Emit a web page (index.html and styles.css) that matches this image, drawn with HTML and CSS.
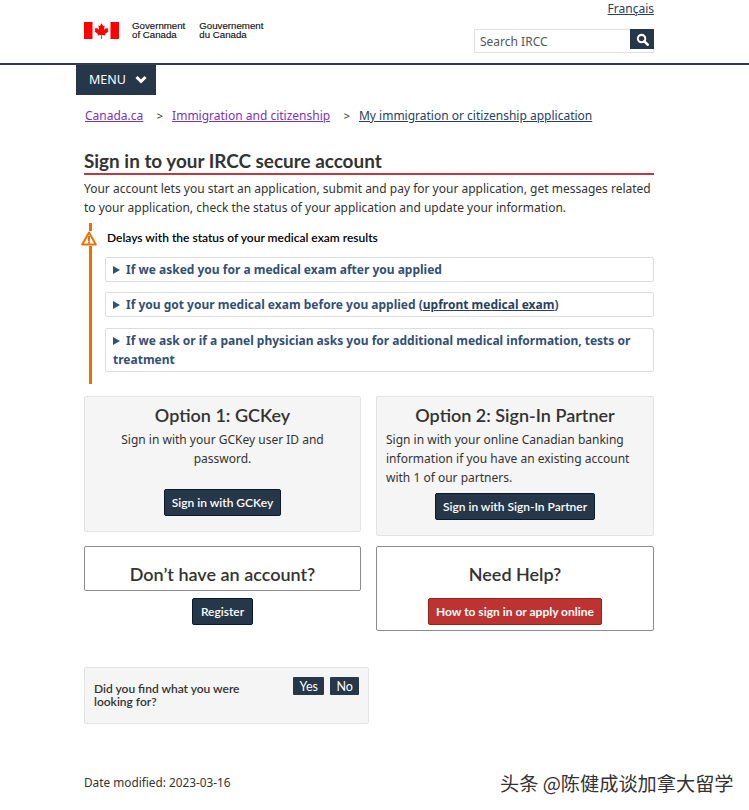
FILE: index.html
```html
<!DOCTYPE html>
<html lang="en">
<head>
<meta charset="utf-8">
<title>Sign in to your IRCC secure account</title>
<link rel="stylesheet" href="styles.css">
</head>
<body>
<header class="site-header">
  <div class="header-inner">
    <div class="brand">
      <svg class="flag" width="35" height="17" viewBox="0 0 35 17"><rect width="8.5" height="17" fill="#f00"/><rect x="26.5" width="8.5" height="17" fill="#f00"/><path fill="#f00" d="M17.5 1.2l-1.5 2.6c-.2.3-.5.3-.7.1l-1-.5.7 3.6c.1.6-.3.8-.7.3l-1.5-1.6-.3.9-1.9-.4.6 2c.1.4.1.6-.2.7l-.7.3 3.300 2.600c.2.2.3.4.2.7l-.3 1 3.300-.4c.2 0 .4.1.4.4l-.2 3.300h1l-.2-3.300c0-.3.2-.4.4-.4l3.300.4-.3-1c-.1-.3 0-.5.2-.7l3.300-2.600-.7-.3c-.3-.1-.3-.3-.2-.7l.6-2-1.900.4-.3-.9-1.500 1.600c-.4.5-.8.3-.7-.3l.7-3.600-1 .5c-.2.2-.5.2-.7-.1z"/></svg>
      <div class="wordmark"><span>Government<br>of Canada</span><span>Gouvernement<br>du Canada</span></div>
    </div>
    <div class="tools">
      <a class="lang" href="#">Français</a>
      <form class="search">
        <input class="search-input" type="text" placeholder="Search IRCC">
        <button class="search-btn" type="button" aria-label="Search"><svg width="13" height="13" viewBox="0 0 14 14"><circle cx="6" cy="6" r="4" fill="none" stroke="#fff" stroke-width="2.2"/><path d="M9 9l3.600 3.600" stroke="#fff" stroke-width="2.800" stroke-linecap="round"/></svg></button>
      </form>
    </div>
  </div>
</header>
<div class="menu-row">
  <button class="menu-btn" type="button">MENU <svg width="12" height="9" viewBox="0 0 12 9"><path d="M1.500 2l4.500 4.500L10.500 2" fill="none" stroke="#fff" stroke-width="3"/></svg></button>
</div>
<main class="page">
  <nav class="crumbs">
    <a class="visited" href="#">Canada.ca</a><span class="sep">&gt;</span>
    <a class="visited" href="#">Immigration and citizenship</a><span class="sep">&gt;</span>
    <a href="#">My immigration or citizenship application</a>
  </nav>
  <h1 class="title">Sign in to your IRCC secure account</h1>
  <p class="intro">Your account lets you start an application, submit and pay for your application, get messages related to your application, check the status of your application and update your information.</p>
  <section class="alert">
    <svg class="alert-icon" width="16" height="15" viewBox="0 0 16 15"><path d="M8 1.500L14.800 13.500H1.200z" fill="#fff" stroke="#ee7100" stroke-width="2" stroke-linejoin="round"/><rect x="7" y="5" width="2" height="5" fill="#ee7100"/><rect x="7" y="10.500" width="2" height="2" fill="#ee7100"/></svg>
    <h2 class="alert-title">Delays with the status of your medical exam results</h2>
    <div class="detail"><span class="tri"></span>If we asked you for a medical exam after you applied</div>
    <div class="detail"><span class="tri"></span>If you got your medical exam before you applied (<a href="#">upfront medical exam</a>)</div>
    <div class="detail detail-last"><span class="tri"></span>If we ask or if a panel physician asks you for additional medical information, tests or treatment</div>
  </section>
  <div class="options">
    <div class="col">
      <section class="well centered">
        <h2 class="option-title">Option 1: GCKey</h2>
        <p class="option-text">Sign in with your GCKey user ID and password.</p>
        <div class="btn-row btn-row-gap"><a class="btn" href="#">Sign in with GCKey</a></div>
      </section>
      <section class="outline short centered">
        <h2 class="option-title">Don’t have an account?</h2>
      </section>
      <div class="btn-row"><a class="btn btn-wide" href="#">Register</a></div>
    </div>
    <div class="col">
      <section class="well">
        <h2 class="option-title centered">Option 2: Sign-In Partner</h2>
        <p class="option-text">Sign in with your online Canadian banking information if you have an existing account with 1 of our partners.</p>
        <div class="btn-row"><a class="btn" href="#">Sign in with Sign-In Partner</a></div>
      </section>
      <section class="outline centered tall">
        <h2 class="option-title">Need Help?</h2>
        <div class="btn-row btn-row-help"><a class="btn btn-red" href="#">How to sign in or apply online</a></div>
      </section>
    </div>
  </div>
  <section class="feedback">
    <p class="feedback-q">Did you find what you were looking for?</p>
    <div class="feedback-btns"><a class="mini" href="#">Yes</a><a class="mini" href="#">No</a></div>
  </section>
  <p class="modified">Date modified: 2023-03-16</p>
</main>
<div class="watermark">头条 @陈健成谈加拿大留学</div>
</body>
</html>
```
FILE: styles.css
```css
* { box-sizing: border-box; }
html, body { margin: 0; padding: 0; }
body { position: relative; height: 810px; overflow: hidden; background: #fff; color: #333; font-family: "Noto Sans", "Open Sans", sans-serif; font-size: 12px; line-height: 19px; }
a { color: #284162; }
.site-header { height: 65px; border-bottom: 2px solid #333f4a; }
.header-inner { width: 570px; margin-left: 84px; display: flex; justify-content: space-between; }
.brand { display: flex; align-items: flex-start; gap: 13px; padding-top: 22px; }
.flag { display: block; }
.wordmark { display: flex; gap: 14px; margin-top: -1px; font-family: "Liberation Sans", sans-serif; font-size: 9.7px; line-height: 9.3px; color: #111; -webkit-text-stroke: .15px #111; }
.tools { width: 180px; display: flex; flex-direction: column; align-items: flex-end; }
.lang { height: 29px; line-height: 17px; color: #284162; }
.search { display: flex; width: 180px; height: 24px; border: 1px solid #e0e0e0; position: relative; }
.search-input { flex: 1; min-width: 0; border: 0; padding: 0 5px; font: 12px "Noto Sans", sans-serif; color: #555; background: transparent; outline: 0; }
.search-input::placeholder { color: #555; opacity: 1; }
.search-btn { position: absolute; top: -1px; right: -1px; width: 24px; height: 20px; border: 0; padding: 0; background: #26374a; display: flex; align-items: center; justify-content: center; }
.menu-row { padding-left: 76px; height: 30px; }
.menu-btn { width: 80px; height: 30px; border: 0; padding: 0 0 2px 13px; background: #26374a; color: #fff; font: 12.5px "Noto Sans", sans-serif; display: flex; align-items: center; gap: 9px; }
.page { width: 570px; margin-left: 84px; }
.crumbs { padding: 11px 0 0 1px; height: 47px; display: flex; align-items: flex-start; }
.visited { color: #7834bc; }
.sep { margin: 0 9px 0 13.5px; font-size: 11px; color: #333; }
.title { margin: 0; height: 33px; padding-top: 5px; border-bottom: 2px solid #bc3a40; font-family: Lato, sans-serif; font-weight: 700; font-size: 18.9px; line-height: 28px; color: #333; }
.intro { margin: 4px 0 0; }
.alert { position: relative; margin: 6px 0 0 5px; padding: 5px 0 0 13px; border-left: 3px solid #ee7100; height: 161px; }
.alert-icon { position: absolute; left: -11px; top: 8px; background: #fff; }
.alert-title { margin: 0 0 10px 2px; font: 600 12px/19px Lato, sans-serif; color: #000; }
.detail { margin-top: 10px; padding: 2px 7px; border: 1px solid #ddd; border-radius: 2px; color: #335075; font-weight: 700; font-size: 12px; }
.alert-title + .detail { margin-top: 0; }
.detail-last { margin-top: 11px; }
.detail a { color: #284162; }
.tri { display: inline-block; margin: 0 6px 0 0; width: 0; height: 0; border-left: 7px solid #335075; border-top: 4px solid transparent; border-bottom: 4px solid transparent; }
.options { display: grid; grid-template-columns: 277px 278px; column-gap: 15px; align-items: start; margin-top: 12px; }
.col { display: flex; flex-direction: column; }
.centered { text-align: center; }
.well { padding: 6px 9px 15px; background: #f5f5f5; border: 1px solid #e3e3e3; border-radius: 2px; }
.outline { margin-top: 14px; padding-top: 15px; border: 1px solid #8c8c8c; border-radius: 2px; }
.short { height: 45px; margin-bottom: 7px; }
.tall { height: 85px; margin-top: 10px; }
.option-title { margin: 0; font-family: Lato, sans-serif; font-weight: 600; font-size: 18px; line-height: 25px; color: #333; }
.option-text { margin: 2px 0 6px; }
.btn-row { display: flex; justify-content: center; }
.btn-row-gap { margin-top: 21px; }
.btn-row-help { margin-top: 11px; }
.btn { display: block; height: 27px; padding: 4px 7px; background: #26374a; border: 1px solid #091c2d; border-radius: 2px; color: #fff; font-family: Lato, sans-serif; font-weight: 600; font-size: 12px; line-height: 17px; text-decoration: none; }
.btn-wide { padding: 4px 7.5px; }
.btn-red { background: #bc3331; border-color: #942514; font-weight: 700; }
.feedback { width: 285px; height: 57px; margin-top: 36px; padding: 9px; display: flex; background: #f5f5f5; border: 1px solid #e3e3e3; border-radius: 2px; }
.feedback-q { margin: 5px 0 0; width: 160px; font-family: Lato, sans-serif; font-weight: 600; font-size: 12px; line-height: 13px; color: #333; }
.feedback-btns { margin-left: 39px; display: flex; gap: 6px; align-items: flex-start; }
.mini { height: 18px; padding: 0 6.5px; background: #26374a; border-radius: 1px; color: #fff; font-family: Lato, sans-serif; font-size: 12.5px; line-height: 19px; text-decoration: none; }
.mini + .mini { padding: 0 6px; }
.modified { margin: 49px 0 0; font-size: 11.8px; }
.watermark { position: absolute; left: 500px; top: 771px; font-family: "Noto Sans CJK SC", sans-serif; font-size: 19.2px; line-height: 24px; color: #333; }
```
